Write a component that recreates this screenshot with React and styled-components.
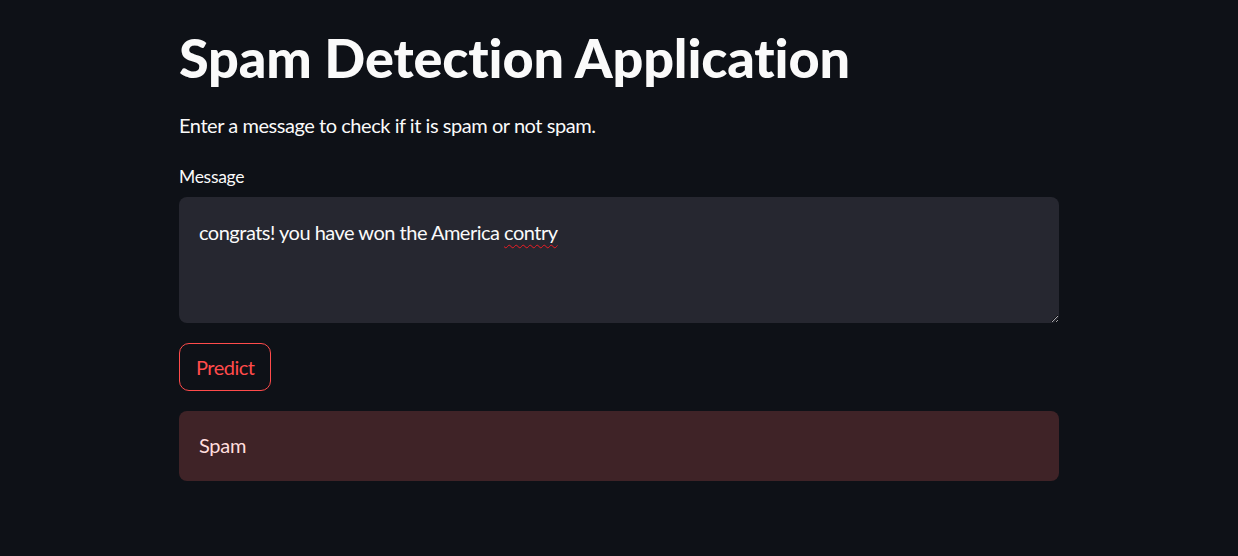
import React from "react";
import styled, { createGlobalStyle } from "styled-components";

const Global = createGlobalStyle`
  html, body { margin: 0; padding: 0; background: #0e1117; }
  body { font-family: "Lato", "Noto Sans", sans-serif; color: #fafafa; }
`;

const Page = styled.main`
  min-height: 556px;
  background: #0e1117;
  display: flex;
  justify-content: center;
`;

const Column = styled.div`
  width: 880px;
  display: flex;
  flex-direction: column;
  padding-top: 18px;
`;

const Title = styled.h1`
  margin: 0;
  height: 80px;
  font-size: 54px;
  line-height: 80px;
  font-weight: 900;
  letter-spacing: -0.15px;
  color: #fafafa;
`;

const Subtitle = styled.p`
  margin: 12px 0 0;
  font-size: 20px;
  line-height: 30px;
  letter-spacing: -0.45px;
  color: #fafafa;
`;

const Label = styled.label`
  margin-top: 26px;
  font-size: 17.5px;
  line-height: 22px;
  letter-spacing: -0.3px;
  color: #fafafa;
`;

const TextArea = styled.div`
  margin-top: 9px;
  height: 86px;
  padding: 20px 20px 20px;
  background: #262730;
  border-radius: 8px;
  font-size: 20px;
  line-height: 30px;
  letter-spacing: -0.5px;
  color: #fafafa;
  overflow: auto;
  resize: vertical;
`;

const Misspelled = styled.span`
  text-decoration: underline wavy #ee1c24;
  text-decoration-thickness: 1px;
  text-underline-offset: 4px;
`;

const Button = styled.button`
  align-self: flex-start;
  margin-top: 20px;
  height: 48px;
  padding: 0 16px;
  background: transparent;
  border: 1px solid #ff4b4b;
  border-radius: 10px;
  color: #ff4b4b;
  font-family: inherit;
  font-size: 20px;
  line-height: 30px;
  letter-spacing: -0.5px;
  cursor: pointer;
`;

const Alert = styled.div`
  margin-top: 20px;
  height: 70px;
  box-sizing: border-box;
  padding: 19px 20px;
  background: #3f2327;
  border-radius: 8px;
  color: #ffdede;
  font-size: 20px;
  line-height: 30px;
  letter-spacing: -0.3px;
`;

export default function App() {
  return (
    <>
      <Global />
      <Page>
        <Column>
          <Title>Spam Detection Application</Title>
          <Subtitle>Enter a message to check if it is spam or not spam.</Subtitle>
          <Label>Message</Label>
          <TextArea>
            congrats! you have won the America <Misspelled>contry</Misspelled>
          </TextArea>
          <Button>Predict</Button>
          <Alert>Spam</Alert>
        </Column>
      </Page>
    </>
  );
}
